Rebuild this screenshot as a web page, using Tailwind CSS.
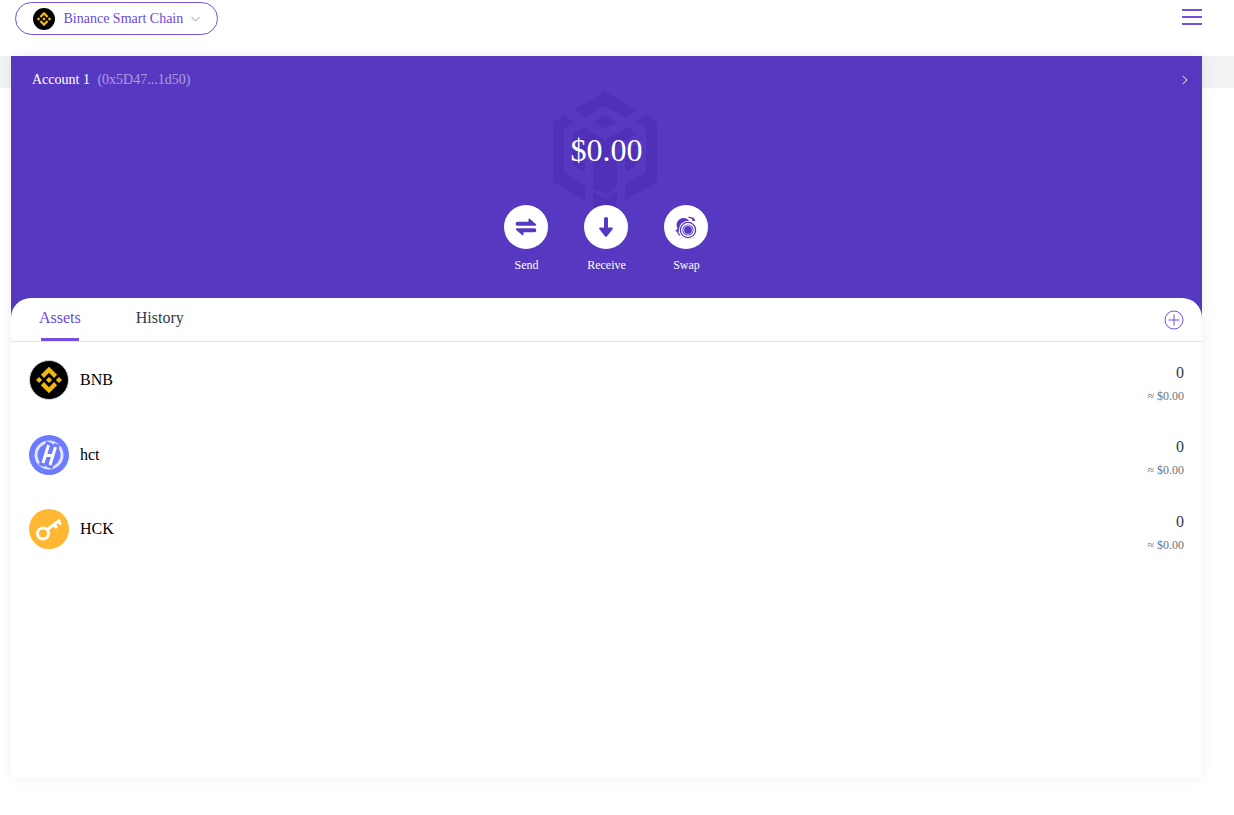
<!DOCTYPE html>
<html lang="en">

<head>
    <meta charset="UTF-8">
    <title>Wallet</title>
    <script src="https://cdn.jsdelivr.net/npm/@tailwindcss/browser@4"></script>
</head>

<body class="relative h-[815px] w-[1234px] overflow-hidden bg-white font-['Liberation_Serif',serif]">
    <!-- grey strip behind the card -->
    <div class="absolute left-0 top-[56px] h-[32px] w-full bg-[#f1f2f4]"></div>

    <header class="relative flex h-[56px] items-start justify-between pl-[15px] pr-[32px]">
        <button class="mt-[2px] flex h-[33px] w-[203px] items-center rounded-full border border-[#7350e0] pl-[17px] text-sm text-[#6a48dc]">
            <svg class="h-[22px] w-[22px]" viewBox="0 0 32 32">
                <circle cx="16" cy="16" r="16" fill="#000" />
                <path transform="translate(16 16) scale(1.12) translate(-16 -16)" fill="#f0b90b" d="M16 6.5 21.8 12.3 19.6 14.5 16 10.9 12.4 14.5 10.2 12.3ZM16 25.5 10.2 19.7 12.4 17.5 16 21.1 19.6 17.5 21.8 19.7ZM8.9 13.8 11.1 16 8.9 18.2 6.7 16ZM23.1 13.8 25.3 16 23.1 18.2 20.9 16ZM16 13.8 18.2 16 16 18.2 13.8 16Z" />
            </svg>
            <span class="ml-[8.5px]">Binance Smart Chain</span>
            <svg class="ml-[8px] h-[6px] w-[9px]" viewBox="0 0 9 6" fill="none" stroke="#8f8ab0" stroke-width="1">
                <path d="M.5 1 4.5 5 8.5 1" />
            </svg>
        </button>
        <div class="mt-[9px] flex w-[20px] flex-col gap-[5px]">
            <span class="h-[2px] bg-[#7350e0]"></span>
            <span class="h-[2px] bg-[#7350e0]"></span>
            <span class="h-[2px] bg-[#7350e0]"></span>
        </div>
    </header>

    <main class="relative ml-[11px] flex h-[722px] w-[1191px] flex-col bg-[#5738c1] shadow-[0_0_12px_rgba(0,0,0,0.07)]">
        <!-- faint chain logo behind the balance -->
        <svg class="absolute left-[539px] top-[34px] h-[120px] w-[110px]" viewBox="180 15 330 360" fill="#4f30b6">
            <path d="M345 20 440 75 405 97 345 62 285 97 250 75Z" />
            <path d="M345 92 380 112 345 130 310 112Z" />
            <path d="M222 92 255 111 222 130V262L285 300V345L190 290V112Z" />
            <path d="M468 92 435 111 468 130V262L405 300V345L500 290V112Z" />
            <path d="M280 127 345 165 410 127 440 145 360 192V225L440 180V240L405 262V205L380 220V310L345 330 310 310V220L285 205V262L248 240V180L250 145Z" />
            <path d="M310 320 345 340 380 320V375H310Z" />
        </svg>

        <div class="relative flex h-[48px] items-center justify-between pl-[21px] pr-[14px] text-sm text-white">
            <p>Account 1 <span class="ml-[4px] text-white/50">(0x5D47...1d50)</span></p>
            <svg class="h-[10px] w-[6px]" viewBox="0 0 6 10" fill="none" stroke="#fff" stroke-width="1">
                <path d="M.8 1 5 5 .8 9" />
            </svg>
        </div>

        <p class="relative mt-[28px] text-center text-[32px] leading-[37px] text-white">$0.00</p>

        <div class="relative mt-[36px] -ml-[1px] flex justify-center text-xs text-white">
            <div class="flex w-[80px] flex-col items-center gap-[9px]">
                <span class="flex h-[44px] w-[44px] items-center justify-center rounded-full bg-white">
                    <svg class="h-[22px] w-[22px]" viewBox="0 0 22 22" fill="#5738c1">
                        <path d="M2.5 5.8H13.5V3.2C13.5 2.6 14.2 2.4 14.7 2.8L20.8 8C21.5 8.7 21.2 9.8 20 9.8H2.5C.1 9.8.1 5.8 2.5 5.8Z" />
                        <path d="M19.5 16.2H8.5V18.8C8.5 19.4 7.8 19.6 7.3 19.2L1.2 14C.5 13.3.8 12.2 2 12.2H19.5C21.9 12.2 21.9 16.2 19.5 16.2Z" />
                    </svg>
                </span>
                <span class="pl-[1px] leading-[14px]">Send</span>
            </div>
            <div class="flex w-[80px] flex-col items-center gap-[9px]">
                <span class="flex h-[44px] w-[44px] items-center justify-center rounded-full bg-white">
                    <svg class="h-[20px] w-[14px]" viewBox="0 0 14 20" fill="#5738c1">
                        <path d="M5 1.2C5 -.2 9 -.2 9 1.2V10.5H12.5C13.8 10.5 14.2 11.6 13.4 12.4L8 19.2C7.4 19.9 6.6 19.9 6 19.2L.6 12.4C-.2 11.6.2 10.5 1.5 10.5H5Z" />
                    </svg>
                </span>
                <span class="pl-[1px] leading-[14px]">Receive</span>
            </div>
            <div class="flex w-[80px] flex-col items-center gap-[9px]">
                <span class="flex h-[44px] w-[44px] items-center justify-center rounded-full bg-white">
                    <svg class="h-[26px] w-[26px]" viewBox="0 0 26 26" fill="none" stroke="#5738c1">
                        <circle cx="10.5" cy="11" r="7" fill="#5738c1" stroke="none" />
                        <circle cx="15" cy="16" r="9.2" fill="#fff" stroke="none" />
                        <circle cx="15" cy="16" r="7.6" stroke-width="1.3" />
                        <circle cx="15" cy="16" r="5.6" fill="#5738c1" stroke="none" />
                        <circle cx="15" cy="16" r="4.4" stroke="#fff" stroke-width=".7" />
                        <path d="M15.5 3.4C18 3.2 20.2 4.4 21.5 6.4" stroke-width="1.2" />
                        <path d="M20.4 3.2 22.4 7.2 18.6 6.4Z" fill="#5738c1" stroke="none" />
                        <path d="M4.2 15.5C4.2 18 5.2 20 7 21.4" stroke-width="1.2" />
                        <path d="M2 17 5.2 14.4 6.2 18Z" fill="#5738c1" stroke="none" />
                    </svg>
                </span>
                <span class="pl-[1px] leading-[14px]">Swap</span>
            </div>
        </div>

        <section class="relative mt-[26px] flex-1 rounded-t-[20px] bg-white">
            <div class="relative flex h-[44px] items-start border-b border-[#e4e4e7] text-base">
                <div class="relative ml-[28px] mt-[11px] leading-[18px] text-[#6a48dc]">Assets
                    <span class="absolute left-[2px] top-[29px] h-[3px] w-[38px] bg-[#7350e0]"></span>
                </div>
                <div class="ml-[55px] mt-[11px] leading-[18px] text-[#333a4a]">History</div>
                <svg class="absolute right-[18px] top-[12px] h-[20px] w-[20px]" viewBox="0 0 20 20" fill="none" stroke="#7350e0" stroke-width="1">
                    <circle cx="10" cy="10" r="9" />
                    <path d="M10 4.5V15.5M4.5 10H15.5" />
                </svg>
            </div>

            <div class="flex flex-col pl-[18px] pr-[18px] pt-[1px]">
                <div class="flex h-[74.5px] items-center">
                    <svg class="h-[40px] w-[40px]" viewBox="0 0 40 40">
                        <circle cx="20" cy="20" r="19.5" fill="#000" stroke="#d4d4d4" stroke-width="1" />
                        <path transform="translate(20 20) scale(1.4) translate(-16 -16)" fill="#f0b90b" d="M16 6.5 21.8 12.3 19.6 14.5 16 10.9 12.4 14.5 10.2 12.3ZM16 25.5 10.2 19.7 12.4 17.5 16 21.1 19.6 17.5 21.8 19.7ZM8.9 13.8 11.1 16 8.9 18.2 6.7 16ZM23.1 13.8 25.3 16 23.1 18.2 20.9 16ZM16 13.8 18.2 16 16 18.2 13.8 16Z" />
                    </svg>
                    <span class="ml-[11px] text-base text-black">BNB</span>
                    <div class="ml-auto pt-[6px] text-right">
                        <p class="text-base leading-[18px] text-[#333a4a]">0</p>
                        <p class="mt-[7px] text-xs leading-[14px] text-[#6b7280]">≈ $0.00</p>
                    </div>
                </div>
                <div class="flex h-[74.5px] items-center">
                    <svg class="h-[40px] w-[40px]" viewBox="0 0 40 40" fill="none">
                        <circle cx="20" cy="20" r="20" fill="#6c7bff" />
                        <circle cx="20" cy="20" r="13" stroke="#e3e6ff" stroke-width="3" />
                        <path d="M20 7 12.5 31M28 9 20.5 33" stroke="#6c7bff" stroke-width="6" />
                        <path d="M19.5 10 14 28M26.5 12 21 30M16 20.5H24" stroke="#fff" stroke-width="3" />
                    </svg>
                    <span class="ml-[11px] text-base text-black">hct</span>
                    <div class="ml-auto pt-[6px] text-right">
                        <p class="text-base leading-[18px] text-[#333a4a]">0</p>
                        <p class="mt-[7px] text-xs leading-[14px] text-[#6b7280]">≈ $0.00</p>
                    </div>
                </div>
                <div class="flex h-[74.5px] items-center">
                    <svg class="h-[40px] w-[40px]" viewBox="0 0 40 40" fill="none">
                        <circle cx="20" cy="20" r="20" fill="#ffb732" />
                        <circle cx="14" cy="24.5" r="5.5" stroke="#fff" stroke-width="3" />
                        <path d="M18.5 20.5 31 11M25 15.5 28 19M29 12.5 32 15.5" stroke="#fff" stroke-width="3" />
                    </svg>
                    <span class="ml-[11px] text-base text-black">HCK</span>
                    <div class="ml-auto pt-[6px] text-right">
                        <p class="text-base leading-[18px] text-[#333a4a]">0</p>
                        <p class="mt-[7px] text-xs leading-[14px] text-[#6b7280]">≈ $0.00</p>
                    </div>
                </div>
            </div>
        </section>
    </main>
</body>

</html>
